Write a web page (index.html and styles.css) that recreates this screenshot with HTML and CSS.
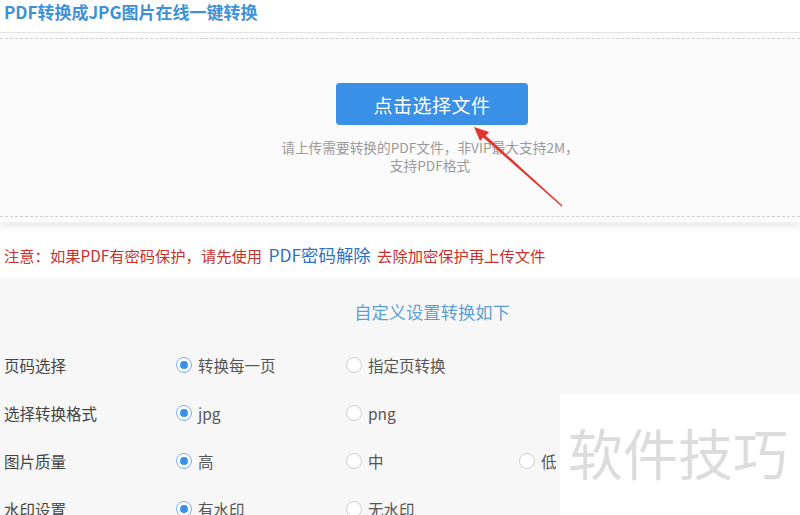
FILE: index.html
```html
<!DOCTYPE html>
<html lang="zh-CN">
<head>
<meta charset="utf-8">
<title>PDF转换成JPG图片在线一键转换</title>
<link rel="stylesheet" href="styles.css">
</head>
<body>
<div class="page">
  <h1 class="title">PDF转换成JPG图片在线一键转换</h1>
  <section class="upload">
    <div class="drop">
      <button class="pick">点击选择文件</button>
      <p class="help">请上传需要转换的PDF文件，非VIP最大支持2M，<br>支持PDF格式</p>
    </div>
  </section>
  <p class="notice">注意：如果PDF有密码保护，请先使用 <a class="link">PDF密码解除</a> 去除加密保护再上传文件</p>
  <section class="settings">
    <h2 class="heading">自定义设置转换如下</h2>
    <div class="grid">
      <div class="label">页码选择</div>
      <div class="opt"><span class="radio on"></span>转换每一页</div>
      <div class="opt"><span class="radio"></span>指定页转换</div>
      <div class="opt"></div>

      <div class="label">选择转换格式</div>
      <div class="opt"><span class="radio on"></span>jpg</div>
      <div class="opt"><span class="radio"></span>png</div>
      <div class="opt"></div>

      <div class="label">图片质量</div>
      <div class="opt"><span class="radio on"></span>高</div>
      <div class="opt"><span class="radio"></span>中</div>
      <div class="opt"><span class="radio"></span>低</div>

      <div class="label">水印设置</div>
      <div class="opt"><span class="radio on"></span>有水印</div>
      <div class="opt"><span class="radio"></span>无水印</div>
      <div class="opt"></div>
    </div>
  </section>
  <svg class="arrow" width="800" height="515" viewBox="0 0 800 515">
    <polygon fill="#e2352b" points="474,127 489,132 485.6,135.4 562.4,205.6 561.6,206.4 483.2,137.6 480,141"/>
  </svg>
  <div class="mark">软件技巧</div>
</div>
</body>
</html>
```
FILE: styles.css
```css
html, body {
  margin: 0;
  padding: 0;
  background: #ffffff;
}
body {
  font-family: "Noto Sans CJK SC", "Microsoft YaHei", "Noto Sans", sans-serif;
  width: 800px;
  height: 515px;
  overflow: hidden;
}
.page {
  position: relative;
  width: 800px;
  height: 515px;
  overflow: hidden;
}
.title {
  margin: 0;
  height: 32px;
  padding: 0 0 0 4px;
  font-size: 17px;
  line-height: 24px;
  font-weight: bold;
  color: #3f91d6;
  box-sizing: border-box;
}
.upload {
  border-top: 1px solid #e4e4e4;
  background: #fbfbfb;
  padding-top: 5px;
  padding-bottom: 5px;
  box-shadow: 0 5px 7px rgba(0, 0, 0, 0.08);
}
.drop {
  border-top: 1px dashed #cfcfcf;
  border-bottom: 1px dashed #cfcfcf;
  display: flex;
  flex-direction: column;
  align-items: center;
  padding-top: 44px;
  box-sizing: border-box;
  height: 179px;
}
.pick {
  width: 192px;
  height: 42px;
  margin-left: 64px;
  border: none;
  border-radius: 4px;
  background: #3a8fe6;
  color: #ffffff;
  font-family: inherit;
  font-size: 19px;
  letter-spacing: 0.5px;
}
.help {
  margin: 13px 0 0 60px;
  text-align: center;
  font-size: 13.7px;
  line-height: 18px;
  color: #9a9a9a;
}
.notice {
  margin: 22px 0 0;
  padding-left: 4px;
  height: 34px;
  font-size: 15.3px;
  line-height: 22px;
  color: #c8312d;
}
.link {
  color: #2f72bd;
  font-size: 17.4px;
  padding: 0 3px;
}
.settings {
  background: #f7f7f7;
  padding-top: 20px;
  height: 260px;
}
.heading {
  margin: 0 0 0 64px;
  text-align: center;
  font-size: 17.3px;
  font-weight: normal;
  line-height: 28px;
  color: #5c9fd3;
}
.grid {
  margin-top: 15px;
  padding-left: 4px;
  display: grid;
  grid-template-columns: 172px 170px 173px 1fr;
  grid-auto-rows: 48px;
  align-items: center;
}
.label {
  font-size: 15.5px;
  color: #444;
}
.opt {
  display: flex;
  align-items: center;
  font-size: 15.5px;
  color: #555;
}
.radio {
  width: 14px;
  height: 14px;
  border-radius: 50%;
  border: 1px solid #cfcfcf;
  background: #fff;
  margin-right: 6px;
  position: relative;
  flex: none;
}
.radio.on {
  border-color: #7db3e6;
}
.radio.on::after {
  content: "";
  position: absolute;
  left: 3px;
  top: 3px;
  width: 8px;
  height: 8px;
  border-radius: 50%;
  background: #3a8fe6;
}
.arrow {
  position: absolute;
  left: 0;
  top: 0;
  pointer-events: none;
}
.mark {
  position: absolute;
  left: 560px;
  top: 395px;
  width: 240px;
  height: 120px;
  background: #ffffff;
  color: #dcdcdc;
  font-size: 55px;
  line-height: 60px;
  padding-top: 26px;
  padding-left: 8px;
  box-sizing: border-box;
  white-space: nowrap;
}
```
